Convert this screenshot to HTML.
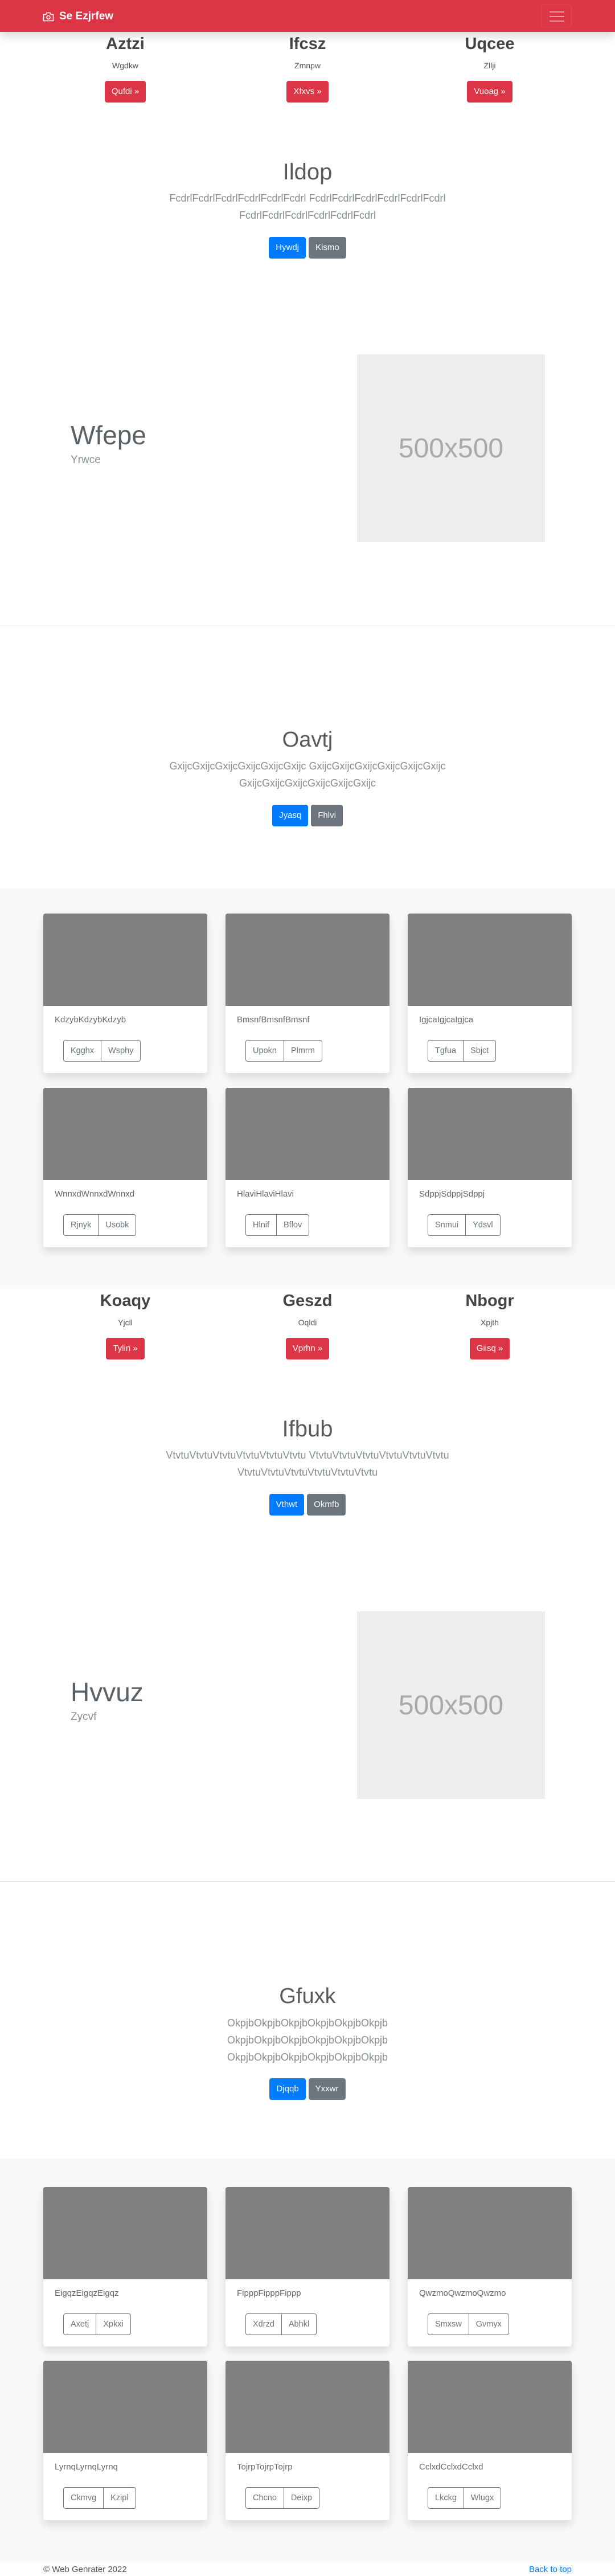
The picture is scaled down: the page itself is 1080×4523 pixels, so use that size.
<!DOCTYPE html>
<html><head><meta charset="utf-8">
<style>
*{box-sizing:border-box;margin:0;padding:0}
body{width:1080px;height:4523px;position:relative;background:#fff;font-family:"Liberation Sans",sans-serif;color:#212529;overflow:hidden}
.a{position:absolute}
.nav{left:0;top:0;width:1080px;height:56px;background:#dc3545;box-shadow:0 8px 16px rgba(0,0,0,.15);z-index:2}
.brand{left:75px;top:17px;color:#fff;font-weight:bold;font-size:19px;line-height:24px;display:flex;align-items:center}
.tog{left:950px;top:8px;width:54px;height:40px;border:1px solid rgba(255,255,255,.1);border-radius:4px}
.tog i{position:absolute;left:14px;width:26px;height:2px;background:rgba(255,255,255,.5)}
.col{width:320px;text-align:center}
.col h2{font-size:29px;line-height:38px;font-weight:bold;color:#454545}
.col .s{font-size:14px;line-height:20px;color:#555}
.btn{display:inline-block;height:38px;line-height:38px;padding:0 12px;font-size:15px;border-radius:4px;color:#fff}
.red{background:#dc3545}
.blue{background:#007bff}
.gray{background:#6c757d}
.center{left:0;width:1080px;text-align:center}
.hd{font-size:40px;line-height:50px;font-weight:normal;color:#5a5a5a}
.p{font-size:18px;line-height:30px;color:#868e96}
.pair{display:flex;justify-content:center;gap:5px}
.hr{left:0;width:1080px;height:1px;background:#e2e4e6}
.gsec{left:0;width:1080px;background:#f8f9fa}
.card{width:288px;height:280px;background:#fff;border-radius:4px;box-shadow:0 8px 16px rgba(0,0,0,.13);overflow:hidden}
.card .im{height:162px;background:#808080}
.card .t{position:absolute;left:20px;top:176px;font-size:15px;line-height:22px;color:#666}
.card .g{position:absolute;left:35px;top:222px;height:38px;display:flex;border:1px solid #6c757d;border-radius:4px}
.card .g span{padding:0 12px;line-height:36px;font-size:14.5px;color:#6c757d}
.card .g span+span{border-left:1px solid #6c757d}
.ph{width:330px;height:330px;background:#eee;color:#aaa;font-size:48px;display:flex;align-items:center;justify-content:center}
.ft{font-size:46px;line-height:56px;color:#5a6268}
.fs{font-size:19px;line-height:26px;color:#868e96}
</style></head><body>

<div class="a nav">
 <div class="a brand"><svg width="20" height="17" viewBox="0 0 20 17" fill="none" stroke="#fff" stroke-width="1.6"><path d="M1.5 4.5h4l1.5-3h6l1.5 3h4v11h-17z"/><circle cx="10" cy="9.5" r="3"/></svg><span style="margin-left:9px">Se Ezjrfew</span></div>
 <div class="a tog"><i style="top:11px"></i><i style="top:19px"></i><i style="top:27px"></i></div>
</div>

<div class="a col" style="left:60px;top:58px"><h2>Aztzi</h2></div>
<div class="a col" style="left:380px;top:58px"><h2>Ifcsz</h2></div>
<div class="a col" style="left:700px;top:58px"><h2>Uqcee</h2></div>
<div class="a col" style="left:60px;top:105px"><span class="s">Wgdkw</span></div>
<div class="a col" style="left:380px;top:105px"><span class="s">Zmnpw</span></div>
<div class="a col" style="left:700px;top:105px"><span class="s">Zllji</span></div>
<div class="a col" style="left:60px;top:142px"><span class="btn red">Qufdi »</span></div>
<div class="a col" style="left:380px;top:142px"><span class="btn red">Xfxvs »</span></div>
<div class="a col" style="left:700px;top:142px"><span class="btn red">Vuoag »</span></div>

<div class="a center hd" style="top:277px">Ildop</div>
<div class="a center p" style="top:333px">FcdrlFcdrlFcdrlFcdrlFcdrlFcdrl FcdrlFcdrlFcdrlFcdrlFcdrlFcdrl<br>FcdrlFcdrlFcdrlFcdrlFcdrlFcdrl</div>
<div class="a center pair" style="top:416px"><span class="btn blue">Hywdj</span><span class="btn gray">Kismo</span></div>

<div class="a ft" style="left:124px;top:736px">Wfepe</div>
<div class="a fs" style="left:124px;top:795px">Yrwce</div>
<div class="a ph" style="left:627px;top:622px">500x500</div>

<div class="a hr" style="top:1097px"></div>
<div class="a center hd" style="top:1274px;font-size:38px">Oavtj</div>
<div class="a center p" style="top:1330px">GxijcGxijcGxijcGxijcGxijcGxijc GxijcGxijcGxijcGxijcGxijcGxijc<br>GxijcGxijcGxijcGxijcGxijcGxijc</div>
<div class="a center pair" style="top:1413px"><span class="btn blue">Jyasq</span><span class="btn gray">Fhlvi</span></div>

<div class="a gsec" style="top:1560px;height:703px"></div>
<div class="a card" style="left:76px;top:1604px"><div class="im"></div><div class="t">KdzybKdzybKdzyb</div><div class="g"><span>Kgghx</span><span>Wsphy</span></div></div>
<div class="a card" style="left:396px;top:1604px"><div class="im"></div><div class="t">BmsnfBmsnfBmsnf</div><div class="g"><span>Upokn</span><span>Plmrm</span></div></div>
<div class="a card" style="left:716px;top:1604px"><div class="im"></div><div class="t">IgjcaIgjcaIgjca</div><div class="g"><span>Tgfua</span><span>Sbjct</span></div></div>
<div class="a card" style="left:76px;top:1910px"><div class="im"></div><div class="t">WnnxdWnnxdWnnxd</div><div class="g"><span>Rjnyk</span><span>Usobk</span></div></div>
<div class="a card" style="left:396px;top:1910px"><div class="im"></div><div class="t">HlaviHlaviHlavi</div><div class="g"><span>Hlnif</span><span>Bflov</span></div></div>
<div class="a card" style="left:716px;top:1910px"><div class="im"></div><div class="t">SdppjSdppjSdppj</div><div class="g"><span>Snmui</span><span>Ydsvl</span></div></div>

<div class="a col" style="left:60px;top:2265px"><h2>Koaqy</h2></div>
<div class="a col" style="left:380px;top:2265px"><h2>Geszd</h2></div>
<div class="a col" style="left:700px;top:2265px"><h2>Nbogr</h2></div>
<div class="a col" style="left:60px;top:2312px"><span class="s">Yjcll</span></div>
<div class="a col" style="left:380px;top:2312px"><span class="s">Oqldi</span></div>
<div class="a col" style="left:700px;top:2312px"><span class="s">Xpjth</span></div>
<div class="a col" style="left:60px;top:2349px"><span class="btn red">Tylin »</span></div>
<div class="a col" style="left:380px;top:2349px"><span class="btn red">Vprhn »</span></div>
<div class="a col" style="left:700px;top:2349px"><span class="btn red">Giisq »</span></div>

<div class="a center hd" style="top:2484px">Ifbub</div>
<div class="a center p" style="top:2540px">VtvtuVtvtuVtvtuVtvtuVtvtuVtvtu VtvtuVtvtuVtvtuVtvtuVtvtuVtvtu<br>VtvtuVtvtuVtvtuVtvtuVtvtuVtvtu</div>
<div class="a center pair" style="top:2623px"><span class="btn blue">Vthwt</span><span class="btn gray">Okmfb</span></div>

<div class="a ft" style="left:124px;top:2943px">Hvvuz</div>
<div class="a fs" style="left:124px;top:3002px">Zycvf</div>
<div class="a ph" style="left:627px;top:2829px">500x500</div>

<div class="a hr" style="top:3303px"></div>
<div class="a center hd" style="top:3480px;font-size:38px">Gfuxk</div>
<div class="a center p" style="top:3537px">OkpjbOkpjbOkpjbOkpjbOkpjbOkpjb<br>OkpjbOkpjbOkpjbOkpjbOkpjbOkpjb<br>OkpjbOkpjbOkpjbOkpjbOkpjbOkpjb</div>
<div class="a center pair" style="top:3649px"><span class="btn blue">Djqqb</span><span class="btn gray">Yxxwr</span></div>

<div class="a gsec" style="top:3790px;height:709px"></div>
<div class="a card" style="left:76px;top:3840px"><div class="im"></div><div class="t">EigqzEigqzEigqz</div><div class="g"><span>Axetj</span><span>Xpkxi</span></div></div>
<div class="a card" style="left:396px;top:3840px"><div class="im"></div><div class="t">FipppFipppFippp</div><div class="g"><span>Xdrzd</span><span>Abhkl</span></div></div>
<div class="a card" style="left:716px;top:3840px"><div class="im"></div><div class="t">QwzmoQwzmoQwzmo</div><div class="g"><span>Smxsw</span><span>Gvmyx</span></div></div>
<div class="a card" style="left:76px;top:4145px"><div class="im"></div><div class="t">LyrnqLyrnqLyrnq</div><div class="g"><span>Ckmvg</span><span>Kzipl</span></div></div>
<div class="a card" style="left:396px;top:4145px"><div class="im"></div><div class="t">TojrpTojrpTojrp</div><div class="g"><span>Chcno</span><span>Deixp</span></div></div>
<div class="a card" style="left:716px;top:4145px"><div class="im"></div><div class="t">CclxdCclxdCclxd</div><div class="g"><span>Lkckg</span><span>Wlugx</span></div></div>

<div class="a" style="left:76px;top:4502px;font-size:15px;line-height:20px;color:#555">© Web Genrater 2022</div>
<div class="a" style="right:76px;top:4502px;font-size:15px;line-height:20px;color:#007bff">Back to top</div>
</body></html>
